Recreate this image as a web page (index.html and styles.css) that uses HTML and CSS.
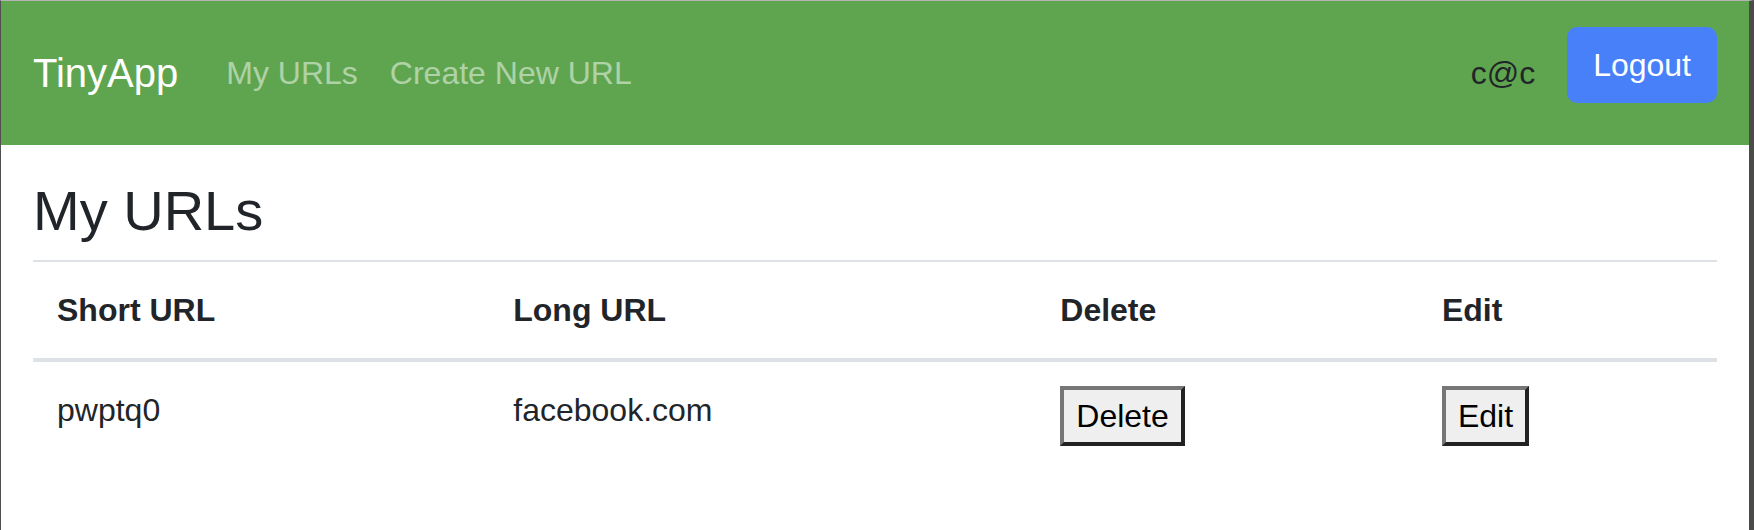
FILE: index.html
```html
<!DOCTYPE html>
<html>
<head>
<meta charset="utf-8">
<title>TinyApp</title>
<link rel="stylesheet" href="styles.css">
</head>
<body>
<div class="frame">
  <nav class="navbar">
    <a class="brand" href="#">TinyApp</a>
    <div class="nav-links">
      <a class="nav-link" href="#">My URLs</a>
      <a class="nav-link" href="#">Create New URL</a>
    </div>
    <div class="nav-right">
      <span class="user">c@c</span>
      <form class="logout-form"><button class="btn-logout" type="button">Logout</button></form>
    </div>
  </nav>
  <main class="content">
    <h3 class="title">My URLs</h3>
    <table class="table">
      <thead>
        <tr>
          <th>Short URL</th>
          <th>Long URL</th>
          <th>Delete</th>
          <th>Edit</th>
        </tr>
      </thead>
      <tbody>
        <tr>
          <td>pwptq0</td>
          <td>facebook.com</td>
          <td><button class="row-btn" type="button">Delete</button></td>
          <td><button class="row-btn" type="button">Edit</button></td>
        </tr>
      </tbody>
    </table>
  </main>
</div>
</body>
</html>
```

FILE: styles.css
```css
html, body {
  margin: 0;
  padding: 0;
}

body {
  font-family: "Liberation Sans", Arial, sans-serif;
  font-size: 32px;
  line-height: 1.5;
  color: #212529;
  background: #fff;
}

.frame {
  height: 530px;
  box-sizing: border-box;
  border-top: 1px solid #b4b4b4;
  border-left: 1px solid #505050;
  border-right: 5px solid #4b4b48;
  overflow: hidden;
}

.navbar {
  display: flex;
  align-items: center;
  height: 144px;
  box-sizing: border-box;
  padding: 32px;
  background: #5fa550;
}

.brand {
  font-size: 40px;
  line-height: 60px;
  padding: 10px 0;
  margin-right: 32px;
  color: #fff;
  text-decoration: none;
}

.nav-links {
  display: flex;
}

.nav-link {
  padding: 16px;
  line-height: 48px;
  color: rgba(255, 255, 255, 0.5);
  text-decoration: none;
}

.nav-right {
  margin-left: auto;
  display: flex;
  align-items: center;
}

.user {
  color: #212529;
  margin-right: 32px;
}

.logout-form {
  margin: 0 0 16px;
}

.btn-logout {
  display: block;
  font: inherit;
  line-height: 48px;
  padding: 12px 24px;
  border: 2px solid #4880f9;
  border-radius: 10px;
  background: #4880f9;
  color: #fff;
}

.content {
  padding: 32px 32px 0;
}

.title {
  font-size: 56px;
  line-height: 1.2;
  font-weight: 400;
  margin: 0 0 16px;
}

.table {
  width: 100%;
  border-collapse: collapse;
}

.table th,
.table td {
  padding: 24px;
  text-align: left;
  vertical-align: top;
  border-top: 2px solid #dee2e6;
}

.table thead th {
  vertical-align: bottom;
  font-weight: 700;
  border-bottom: 4px solid #dee2e6;
}

.row-btn {
  font: inherit;
  line-height: 48px;
  padding: 2px 12px;
  border-width: 4px;
  border-style: solid;
  border-color: #767676 #222 #222 #767676;
  background: #efefef;
  color: #000;
}
```
